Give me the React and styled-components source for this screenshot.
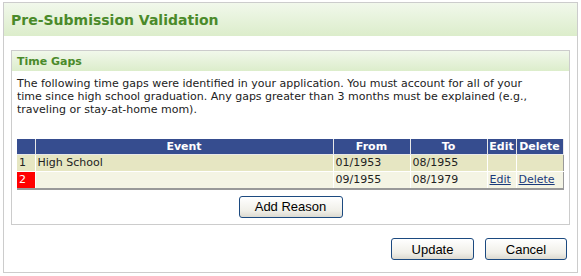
import React from "react";
import styled, { createGlobalStyle } from "styled-components";

const GlobalStyle = createGlobalStyle`
  body {
    margin: 0;
    background: #fff;
    font-family: "DejaVu Sans", Verdana, sans-serif;
  }
`;

const Panel = styled.div`
  margin: 2px 3px 0 3px;
  width: 573px;
  height: 269px;
  border: 1px solid #cccccc;
  box-sizing: content-box;
  display: flex;
  flex-direction: column;
`;

const PanelHeader = styled.div`
  height: 33px;
  display: flex;
  align-items: center;
  padding-left: 7px;
  background: linear-gradient(to bottom, #f1f8eb, #dcedcb);
  color: #4a8a2a;
  font-size: 14px;
  font-weight: bold;
`;

const PanelBody = styled.div`
  padding: 14px 7px 0 7px;
  display: flex;
  flex-direction: column;
`;

const Section = styled.div`
  border: 1px solid #cccccc;
  height: 173px;
  display: flex;
  flex-direction: column;
`;

const SectionHeader = styled.div`
  height: 20px;
  display: flex;
  align-items: center;
  padding-left: 5px;
  background: linear-gradient(to bottom, #f1f8eb, #dcedcb);
  color: #4a8a2a;
  font-size: 11px;
  font-weight: bold;
`;

const Intro = styled.p`
  margin: 6px 20px 0 5px;
  font-size: 11px;
  line-height: 13px;
  color: #222;
  height: 62px;
`;

const Grid = styled.table`
  margin: 0 5px;
  width: 546px;
  table-layout: fixed;
  border-collapse: collapse;
  font-size: 11px;
  border-right: 1px solid #999;
  border-bottom: 2px solid #999;
`;

const Th = styled.th`
  box-sizing: border-box;
  background: #364d8f;
  color: #fff;
  font-weight: bold;
  height: 15px;
  padding: 0 1px;
  border: 1px solid #e8e8e8;
  border-top: none;
  text-align: center;
  white-space: nowrap;
  width: ${(p) => p.$w}px;
  &:first-child { border-left: none; }
`;

const Row = styled.tr`
  background: ${(p) => (p.$alt ? "#f4f4e4" : "#e6e6c2")};
`;

const Td = styled.td`
  height: 16px;
  padding: 0 2px;
  border-left: 1px solid #fff;
  border-bottom: 1px solid #fff;
  white-space: nowrap;
  background: ${(p) => (p.$flag ? "#ff0000" : "transparent")};
  color: ${(p) => (p.$flag ? "#fff" : "#222")};
  &:first-child { border-left: none; }
`;

const Link = styled.a`
  color: #1a3a7a;
  text-decoration: underline;
  cursor: pointer;
`;

const Centered = styled.div`
  display: flex;
  justify-content: center;
  margin-top: 6px;
`;

const Button = styled.button`
  width: ${(p) => p.$w}px;
  height: 22px;
  font-family: "Liberation Sans", Arial, sans-serif;
  font-size: 13px;
  color: #000;
  border: 1px solid #1c4a80;
  border-radius: 3px;
  background: linear-gradient(to bottom, #ffffff, #f0efe8 70%, #dcdad0);
  padding: 0;
`;

const Actions = styled.div`
  display: flex;
  justify-content: flex-end;
  gap: 11px;
  padding: 13px 10px 0 0;
`;

export default function App() {
  return (
    <>
      <GlobalStyle />
      <Panel>
        <PanelHeader>Pre-Submission Validation</PanelHeader>
        <PanelBody>
          <Section>
            <SectionHeader>Time Gaps</SectionHeader>
            <Intro>
              The following time gaps were identified in your application. You must account for all of your
              time since high school graduation. Any gaps greater than 3 months must be explained (e.g.,
              traveling or stay-at-home mom).
            </Intro>
            <Grid>
              <thead>
                <tr>
                  <Th $w={18}></Th>
                  <Th $w={298}>Event</Th>
                  <Th $w={77}>From</Th>
                  <Th $w={77}>To</Th>
                  <Th $w={29}>Edit</Th>
                  <Th $w={47}>Delete</Th>
                </tr>
              </thead>
              <tbody>
                <Row>
                  <Td>1</Td>
                  <Td>High School</Td>
                  <Td>01/1953</Td>
                  <Td>08/1955</Td>
                  <Td></Td>
                  <Td></Td>
                </Row>
                <Row $alt>
                  <Td $flag>2</Td>
                  <Td></Td>
                  <Td>09/1955</Td>
                  <Td>08/1979</Td>
                  <Td><Link>Edit</Link></Td>
                  <Td><Link>Delete</Link></Td>
                </Row>
              </tbody>
            </Grid>
            <Centered>
              <Button $w={104}>Add Reason</Button>
            </Centered>
          </Section>
        </PanelBody>
        <Actions>
          <Button $w={83}>Update</Button>
          <Button $w={82}>Cancel</Button>
        </Actions>
      </Panel>
    </>
  );
}
